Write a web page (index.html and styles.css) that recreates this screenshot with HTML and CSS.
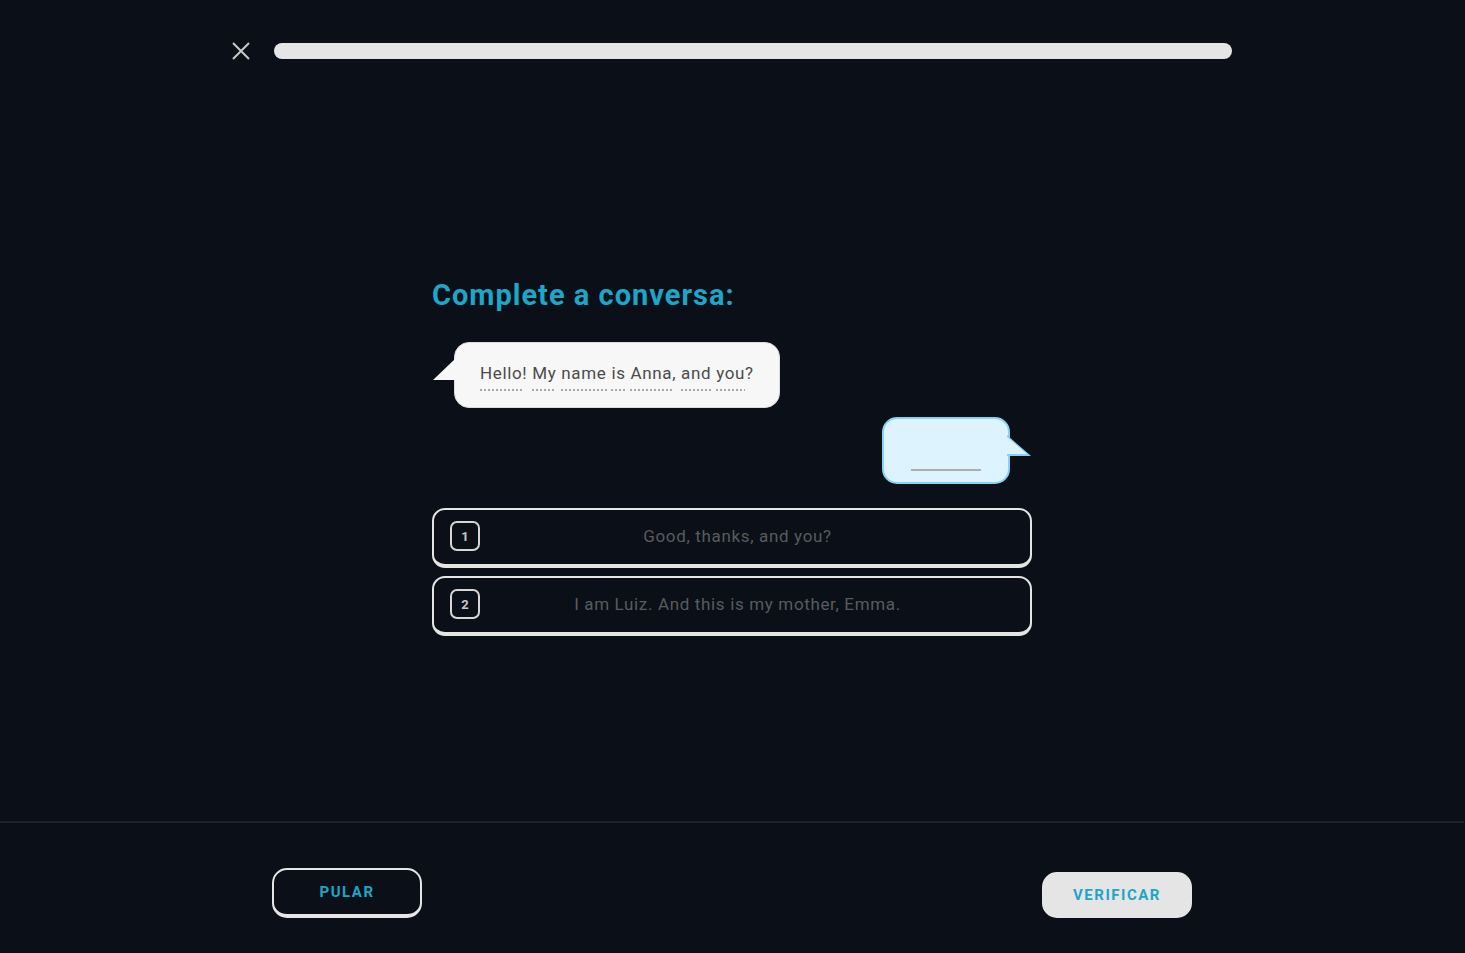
FILE: index.html
```html
<!DOCTYPE html>
<html lang="pt">
<head>
<meta charset="utf-8">
<title>Complete a conversa</title>
<link rel="stylesheet" href="styles.css">
</head>
<body>
<div class="page">
  <header class="topbar">
    <button class="close" aria-label="Fechar">
      <svg width="18" height="18" viewBox="0 0 18 18"><path d="M1 1 L17 17 M17 1 L1 17" stroke="#c9c9c9" stroke-width="2" stroke-linecap="butt" fill="none"/></svg>
    </button>
    <div class="progress"></div>
  </header>

  <main class="main">
    <div class="exercise">
      <h1 class="title">Complete a conversa:</h1>

      <div class="row row-left">
        <div class="bubble bubble-left">
          <span class="tail tail-left"></span>
          <p class="bubble-text"><span class="w">Hello</span>! <span class="w">My</span> <span class="w">name</span> <span class="w">is</span> <span class="w">Anna</span>, <span class="w">and</span> <span class="w">you</span>?</p>
        </div>
      </div>

      <div class="row row-right">
        <div class="bubble bubble-right">
          <span class="tail tail-right"></span>
          <span class="blank"></span>
        </div>
      </div>

      <div class="options">
        <button class="option"><span class="num">1</span><span class="opt-text">Good, thanks, and you?</span></button>
        <button class="option"><span class="num">2</span><span class="opt-text">I am Luiz. And this is my mother, Emma.</span></button>
      </div>
    </div>
  </main>

  <footer class="footer">
    <div class="footer-inner">
      <button class="btn btn-skip">PULAR</button>
      <button class="btn btn-check">VERIFICAR</button>
    </div>
  </footer>
</div>
</body>
</html>
```
FILE: styles.css
```css
* { box-sizing: border-box; }
html, body { margin: 0; padding: 0; height: 100%; }
body {
  background: #0b0f17;
  font-family: Roboto, "Noto Sans", "DejaVu Sans", sans-serif;
  color: #e5e5e5;
}
.page {
  height: 953px;
  display: flex;
  flex-direction: column;
  padding-right: 1px;
}
.topbar {
  width: 1000px;
  margin: 0 auto;
  padding-top: 42px;
  display: flex;
  align-items: center;
  gap: 24px;
}
.close {
  background: none;
  border: 0;
  padding: 0;
  width: 18px;
  height: 18px;
  display: flex;
  cursor: pointer;
}
.progress {
  flex: 1;
  height: 16px;
  border-radius: 8px;
  background: #e5e5e5;
}
.main {
  flex: 1;
  display: flex;
  justify-content: center;
}
.exercise {
  width: 600px;
  padding-top: 217px;
}
.title {
  margin: 0 0 29px;
  font-size: 29px;
  font-weight: 700;
  color: #1ca6c8;
  line-height: 36px;
  letter-spacing: 1px;
}
.row { display: flex; }
.row-left { padding-left: 22px; }
.row-right { justify-content: flex-end; padding-right: 22px; margin-top: 9px; }
.bubble { position: relative; border-radius: 15px; }
.bubble-left {
  background: #f7f7f7;
  border: 1px solid #dcdcdc;
  padding: 19px 25px 16px;
  height: 66px;
}
.bubble-text {
  margin: 0;
  font-size: 17px;
  color: #4b4b4b;
  line-height: 22px;
  white-space: nowrap;
  letter-spacing: 0.65px;
}
.w {
  background-image: linear-gradient(to right, #a8a8a8 50%, transparent 50%);
  background-size: 4px 2px;
  background-repeat: repeat-x;
  background-position: 0 100%;
  padding-bottom: 8px;
}
.tail {
  position: absolute;
  width: 23px;
  height: 22px;
}
.tail-left {
  left: -22px;
  bottom: 27px;
  background: #f7f7f7;
  clip-path: polygon(100% 0, 100% 100%, 0 100%);
}
.bubble-right {
  width: 128px;
  height: 67px;
  background: #ddf3fd;
  border: 2px solid #84d2f4;
  display: flex;
  align-items: flex-end;
  justify-content: center;
  padding-bottom: 11px;
}
.tail-right {
  right: -23px;
  top: 16px;
  width: 24px;
  height: 21px;
  background: #84d2f4;
  clip-path: polygon(0 0, 100% 100%, 0 100%);
}
.tail-right::after {
  content: "";
  position: absolute;
  left: 0;
  top: 2px;
  width: 20px;
  height: 17px;
  background: #ddf3fd;
  clip-path: polygon(0 0, 100% 100%, 0 100%);
}
.blank {
  width: 70px;
  height: 2px;
  background: #adadad;
}
.options {
  margin-top: 24px;
  display: flex;
  flex-direction: column;
  gap: 8px;
}
.option {
  width: 100%;
  height: 60px;
  background: transparent;
  border: 2px solid #e5e5e5;
  border-bottom-width: 4px;
  border-radius: 13px;
  display: flex;
  align-items: center;
  padding: 0 16px 2px;
  font-family: inherit;
  cursor: pointer;
}
.num {
  width: 30px;
  height: 30px;
  flex: none;
  border: 2px solid #d6d6d6;
  border-radius: 7px;
  display: flex;
  align-items: center;
  justify-content: center;
  font-size: 13px;
  font-weight: 700;
  color: #c8c8c8;
}
.opt-text {
  flex: 1;
  text-align: center;
  font-size: 17px;
  color: #585b60;
  padding-right: 19px;
  letter-spacing: 0.65px;
}
.footer {
  border-top: 2px solid #1b222d;
  height: 132px;
}
.footer-inner {
  width: 920px;
  margin: 0 auto;
  display: flex;
  justify-content: space-between;
  align-items: flex-start;
}
.btn {
  font-family: inherit;
  font-weight: 700;
  font-size: 15px;
  letter-spacing: 1.5px;
  color: #1ca6c8;
  border-radius: 15px;
  cursor: pointer;
  width: 150px;
}
.btn-skip {
  margin-top: 45px;
  height: 50px;
  background: transparent;
  border: 2px solid #e5e5e5;
  border-bottom-width: 4px;
  padding-bottom: 2px;
}
.btn-check {
  margin-top: 49px;
  height: 46px;
  background: #e5e5e5;
  border: 0;
}
```
